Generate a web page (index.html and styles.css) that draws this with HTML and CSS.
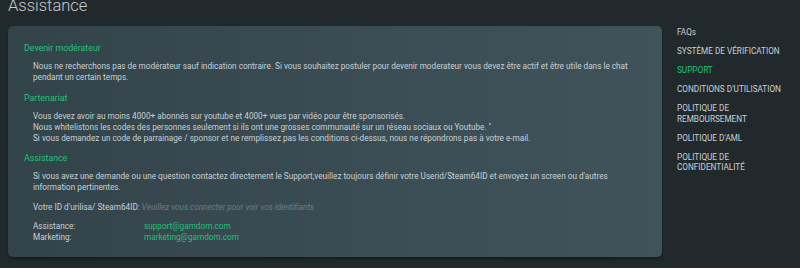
FILE: index.html
```html
<!DOCTYPE html>
<html lang="fr">
<head>
<meta charset="utf-8">
<link rel="stylesheet" href="styles.css">
</head>
<body>
<div class="page">
  <main class="main">
    <h1 class="title">Assistance</h1>
    <section class="card">
      <h2 class="heading">Devenir modérateur</h2>
      <div class="body">
        <p>Nous ne recherchons pas de modérateur sauf indication contraire. Si vous souhaitez postuler pour devenir moderateur vous devez être actif et être utile dans le chat pendant un certain temps.</p>
      </div>
      <h2 class="heading">Partenariat</h2>
      <div class="body">
        <p>Vous devez avoir au moins 4000+ abonnés sur youtube et 4000+ vues par vidéo pour être sponsorisés.<br>Nous whitelistons les codes des personnes seulement si ils ont une grosses communauté sur un réseau sociaux ou Youtube. "<br>Si vous demandez un code de parrainage / sponsor et ne remplissez pas les conditions ci-dessus, nous ne répondrons pas à votre e-mail.</p>
      </div>
      <h2 class="heading">Assistance</h2>
      <div class="body">
        <p>Si vous avez une demande ou une question contactez directement le Support,veuillez toujours définir votre Userid/Steam64ID et envoyez un screen ou d'autres information pertinentes.</p>
        <p class="idline">Votre ID d'urilisa/ Steam64ID: <span class="muted">Veuillez vous connecter pour voir vos identifiants</span></p>
        <div class="contacts">
          <span>Assistance:</span><span class="mail">support@gamdom.com</span>
          <span>Marketing:</span><span class="mail">marketing@gamdom.com</span>
        </div>
      </div>
    </section>
  </main>
  <nav class="side">
    <a>FAQs</a>
    <a>SYSTÈME DE VÉRIFICATION</a>
    <a class="active">SUPPORT</a>
    <a>CONDITIONS D'UTILISATION</a>
    <a>POLITIQUE DE<br>REMBOURSEMENT</a>
    <a>POLITIQUE D'AML</a>
    <a>POLITIQUE DE<br>CONFIDENTIALITÉ</a>
  </nav>
</div>
</body>
</html>
```
FILE: styles.css
```css
* { box-sizing: border-box; }
html, body { margin: 0; padding: 0; }
body {
  background: #22292c;
  font-family: Roboto, "Liberation Sans", sans-serif;
  color: #c9d0d3;
  width: 800px;
  height: 268px;
  overflow: hidden;
}
.page {
  display: flex;
  padding: 0 0 0 8px;
  margin-top: -4px;
}
.main { width: 654px; }
.title {
  margin: 0 0 10px 0;
  font-size: 16.5px;
  font-weight: 300;
  color: #c4cacd;
  line-height: 20px;
}
.card {
  background: linear-gradient(90deg, #33434a 0%, #3b4d55 60%, #40535b 100%);
  border-radius: 5px;
  padding: 16px 16px 16px 16px;
  height: 231px;
  box-shadow: 0 2px 3px rgba(0,0,0,0.35);
}
.heading {
  margin: 0 0 7px 0;
  font-size: 8.8px;
  font-weight: 400;
  color: #21c278;
  line-height: 12px;
}
.body {
  padding-left: 9px;
  font-size: 8.2px;
  line-height: 11px;
  margin-bottom: 8.5px;
}
.body p { margin: 0 0 8.5px 0; }
.idline { margin-top: 0; }
.muted { color: #6d7d84; font-style: italic; }
.contacts {
  display: grid;
  grid-template-columns: 111px auto;
  line-height: 11px;
}
.mail { color: #21c278; }
.side {
  display: flex;
  flex-direction: column;
  gap: 8.5px;
  padding: 31px 0 0 15px;
  font-size: 8.2px;
  line-height: 10.5px;
}
.side a { color: #c9d0d3; }
.side a.active { color: #21c278; }
```
